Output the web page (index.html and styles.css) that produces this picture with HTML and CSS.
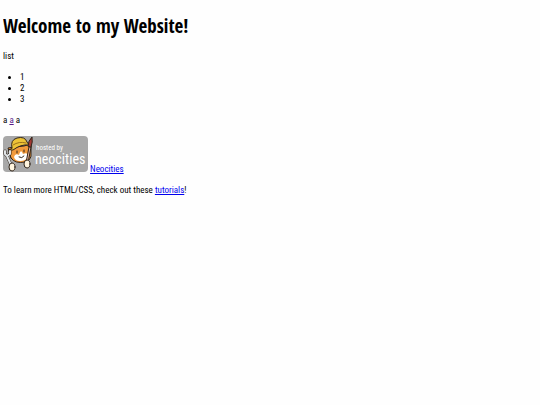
FILE: index.html
```
<!DOCTYPE html>
<html lang="en">
<head>
  <meta charset="UTF-8">
  <meta name="viewport" content="width=device-width, initial-scale=1.0">
  <title>The web site of a</title>
  <link rel="stylesheet" href="styles.css">
</head>
<body>
  <h1>Welcome to my Website!</h1>

  <p>list</p>

  <ul>
    <li>1</li>
    <li>2</li>
    <li>3</li>
  </ul>

  <p>a <a class="visited" href="#a">a</a> a</p>

  <p>
    <svg class="badge" viewBox="0 0 85 36" role="img" aria-label="hosted by neocities">
      <rect width="85" height="36" rx="4" fill="#a8a8a8"/>
      <!-- cat -->
      <g stroke="#30251b" stroke-width="1" stroke-linejoin="round" stroke-linecap="round">
        <path d="M8 22 L5 12 L11 11 L21 10 L28 8 L28 17 Q29 24 22 26 Q12 28 8 22Z" fill="#f29a3c"/>
        <path d="M11 21 Q12 17 16 19 Q18 12 20 18 Q25 16 26 20 Q23 25 17 25 Q12 25 11 21Z" fill="#fff" stroke="none"/>
        <path d="M9 12 Q7 4 14 2 Q22 0 24 6 L26 9 Q18 8 10 14 L6 14Z" fill="#edc337"/>
        <path d="M10 9 Q16 5 23 7" fill="none" stroke="#9d721b"/>
        <path d="M14 15 v2 M21 14 v2 M16 21 Q19 23 21 20" fill="none"/>
        <!-- fork -->
        <path d="M2 15 V18 L4 20 L8 29 M7 15 V18 L4 20" stroke-width="3" fill="none"/>
        <path d="M2 15 V18 L4 20 L8 29 M7 15 V18 L4 20" stroke="#dfe3e6" stroke-width="2" fill="none"/>
        <!-- brush -->
        <path d="M27 11 L24 27" stroke-width="3"/>
        <path d="M27 11 L24 27" stroke="#e9b49c"/>
        <path d="M25 10 Q25 5 29 1 Q30 6 28 11Z" fill="#a33a35"/>
        <ellipse cx="9" cy="31" rx="3" ry="4" fill="#fff5df"/>
        <ellipse cx="24" cy="28" rx="3" ry="4" fill="#fff5df"/>
      </g>
      <text class="badge-small" x="33" y="14">hosted by</text>
      <text class="badge-name" x="32" y="28">neocities</text>
    </svg>
    <a href="https://neocities.org">Neocities</a>
  </p>

  <p>To learn more HTML/CSS, check out these <a href="https://neocities.org/tutorials">tutorials</a>!</p>
</body>
</html>
```

FILE: styles.css
```
body {
  margin: 16px 3px;
  background: #fefefe;
  color: #000;
  font-family: "Roboto Condensed", "Open Sans", sans-serif;
  font-size: 9px;
  line-height: 11px;
}

h1 {
  margin: 0 0 15px;
  font-family: "Open Sans Condensed", "Roboto Condensed", sans-serif;
  font-size: 19px;
  line-height: 20px;
}

p,
ul {
  margin: 10px 0;
}

ul {
  padding-left: 17px;
}

a {
  color: #0000ee;
}

a.visited {
  color: #551a8b;
}

.badge {
  width: 85px;
  height: 36px;
}

.badge text {
  fill: #fff;
}

.badge .badge-small {
  font-size: 7px;
}

.badge .badge-name {
  font-size: 14px;
}
```
